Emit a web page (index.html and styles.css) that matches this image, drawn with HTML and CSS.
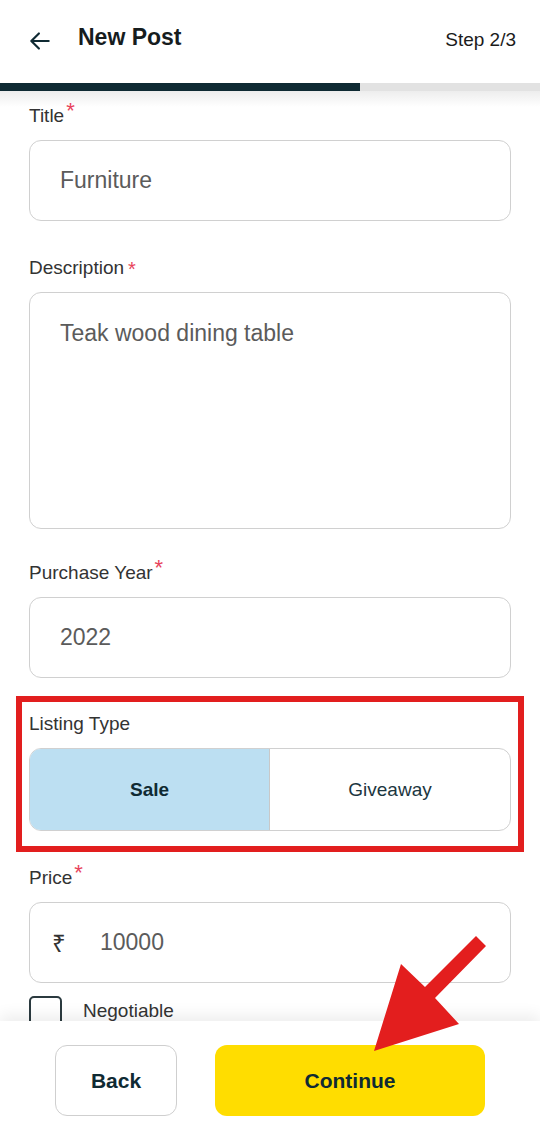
FILE: index.html
```html
<!DOCTYPE html>
<html lang="en">
<head>
    <meta charset="UTF-8">
    <meta name="viewport" content="width=device-width, initial-scale=1.0">
    <title>New Post</title>
    <link rel="stylesheet" href="styles.css">
</head>
<body>
    <div class="screen">
        <header class="topbar">
            <button class="back-btn" aria-label="Back">
                <svg width="26" height="26" viewBox="0 0 24 24" fill="none" stroke="#0f2a33" stroke-width="2" stroke-linecap="round" stroke-linejoin="round">
                    <path d="M20 12H4.5"/>
                    <path d="M11 5l-7 7 7 7"/>
                </svg>
            </button>
            <h1>New Post</h1>
            <span class="step">Step 2/3</span>
        </header>

        <div class="progress">
            <div class="progress-fill" style="width: 66.67%;"></div>
        </div>

        <main class="form">
            <div class="field field-title">
                <label>Title<span class="req">*</span></label>
                <div class="input">Furniture</div>
            </div>

            <div class="field field-desc">
                <label>Description<span class="req req-low">*</span></label>
                <div class="input textarea">Teak wood dining table</div>
            </div>

            <div class="field field-year">
                <label>Purchase Year<span class="req">*</span></label>
                <div class="input">2022</div>
            </div>

            <!-- encadré rouge autour du type d'annonce -->
            <div class="highlight">
                <label>Listing Type</label>
                <div class="segmented">
                    <div class="segment active">Sale</div>
                    <div class="segment">Giveaway</div>
                </div>
            </div>

            <div class="field field-price">
                <label>Price<span class="req">*</span></label>
                <div class="input">
                    <span class="currency">₹</span>
                    <span>10000</span>
                </div>
            </div>

            <div class="check-row">
                <span class="checkbox"></span>
                <span class="check-label">Negotiable</span>
            </div>
        </main>

        <footer class="actions">
            <button class="btn btn-back">Back</button>
            <button class="btn btn-continue">Continue</button>
        </footer>

        <svg class="annot-arrow" width="540" height="1141" viewBox="0 0 540 1141">
            <polygon fill="#e31e1e" points="374,1051 401,964 425,987 476,936 486,946 435,998 459,1024"/>
        </svg>
    </div>
</body>
</html>
```

FILE: styles.css
```css
* {
    box-sizing: border-box;
}
body {
    margin: 0;
    padding: 0;
    font-family: "Liberation Sans", Arial, sans-serif;
    background: #fff;
}
.screen {
    position: relative;
    display: flex;
    flex-direction: column;
    width: 540px;
    height: 1141px;
    overflow: hidden;
    background: #fff;
}
.topbar {
    display: flex;
    align-items: center;
    height: 83px;
    padding: 0 24px 4px 27px;
    flex-shrink: 0;
}
.back-btn {
    display: flex;
    padding: 0;
    margin: 2px 25px 0 0;
    border: none;
    background: none;
}
.topbar h1 {
    margin: 0 0 5px;
    font-size: 23px;
    font-weight: bold;
    color: #161c1e;
    flex: 1;
}
.step {
    font-size: 19px;
    color: #1b1b1b;
    margin-top: 1px;
}
.progress {
    height: 8px;
    background: #e2e2e2;
    flex-shrink: 0;
}
.progress-fill {
    height: 100%;
    background: #0f2a33;
}
.form {
    flex: 1;
    overflow: hidden;
    padding: 12px 29px 0;
    background: linear-gradient(to bottom, #ededed 0, #fff 16px);
}
.field-title {
    margin-bottom: 34px;
}
.field-desc {
    margin-bottom: 31px;
}
.field-year {
    margin-bottom: 18px;
}
.field-price {
    margin-bottom: 13px;
}
label {
    display: block;
    font-size: 19px;
    line-height: 24px;
    color: #333;
    margin-bottom: 12px;
}
.req {
    color: #e8435b;
    font-size: 22px;
    margin-left: 2px;
    position: relative;
    top: -4px;
}
.req-low {
    font-size: 20px;
    top: 2px;
    margin-left: 4px;
}
.input {
    display: flex;
    align-items: center;
    height: 81px;
    padding: 0 30px;
    border: 1.5px solid #d0d0d0;
    border-radius: 12px;
    font-size: 23px;
    color: #5b5b5b;
    background: #fff;
}
.textarea {
    height: 237px;
    align-items: flex-start;
    padding-top: 27px;
}
.currency {
    width: 48px;
    margin-left: -8px;
    color: #333;
    font-size: 24px;
}
.highlight {
    margin: 0 -13px 13px;
    padding: 10px 7px 15px;
    border: 6px solid #e21e1e;
}
.segmented {
    display: grid;
    grid-template-columns: 1fr 1fr;
    height: 83px;
    border: 1.5px solid #d0d0d0;
    border-radius: 12px;
    overflow: hidden;
}
.segment {
    display: flex;
    align-items: center;
    justify-content: center;
    font-size: 19px;
    color: #1c3640;
}
.segment.active {
    background: #bcdff2;
    font-weight: bold;
    color: #0f2a33;
    border-right: 1.5px solid #c8c8c8;
}
.check-row {
    display: flex;
    align-items: flex-start;
    gap: 21px;
    font-size: 19px;
    color: #333;
}
.check-label {
    line-height: 24px;
    padding-top: 3px;
}
.checkbox {
    width: 33px;
    height: 33px;
    border: 2px solid #2b3a3f;
    border-radius: 5px;
}
.actions {
    display: flex;
    justify-content: center;
    gap: 38px;
    height: 120px;
    padding-top: 24px;
    flex-shrink: 0;
    background: #fff;
    box-shadow: 0 -6px 14px rgba(0, 0, 0, 0.07);
    position: relative;
}
.btn {
    height: 71px;
    border-radius: 12px;
    font-family: inherit;
    font-size: 21px;
    font-weight: bold;
    color: #0f2a33;
    cursor: pointer;
}
.btn-back {
    width: 122px;
    background: #fff;
    border: 1.5px solid #cfcfcf;
}
.btn-continue {
    width: 270px;
    background: #ffdd00;
    border: none;
}
.annot-arrow {
    position: absolute;
    top: 0;
    left: 0;
    pointer-events: none;
}
```
